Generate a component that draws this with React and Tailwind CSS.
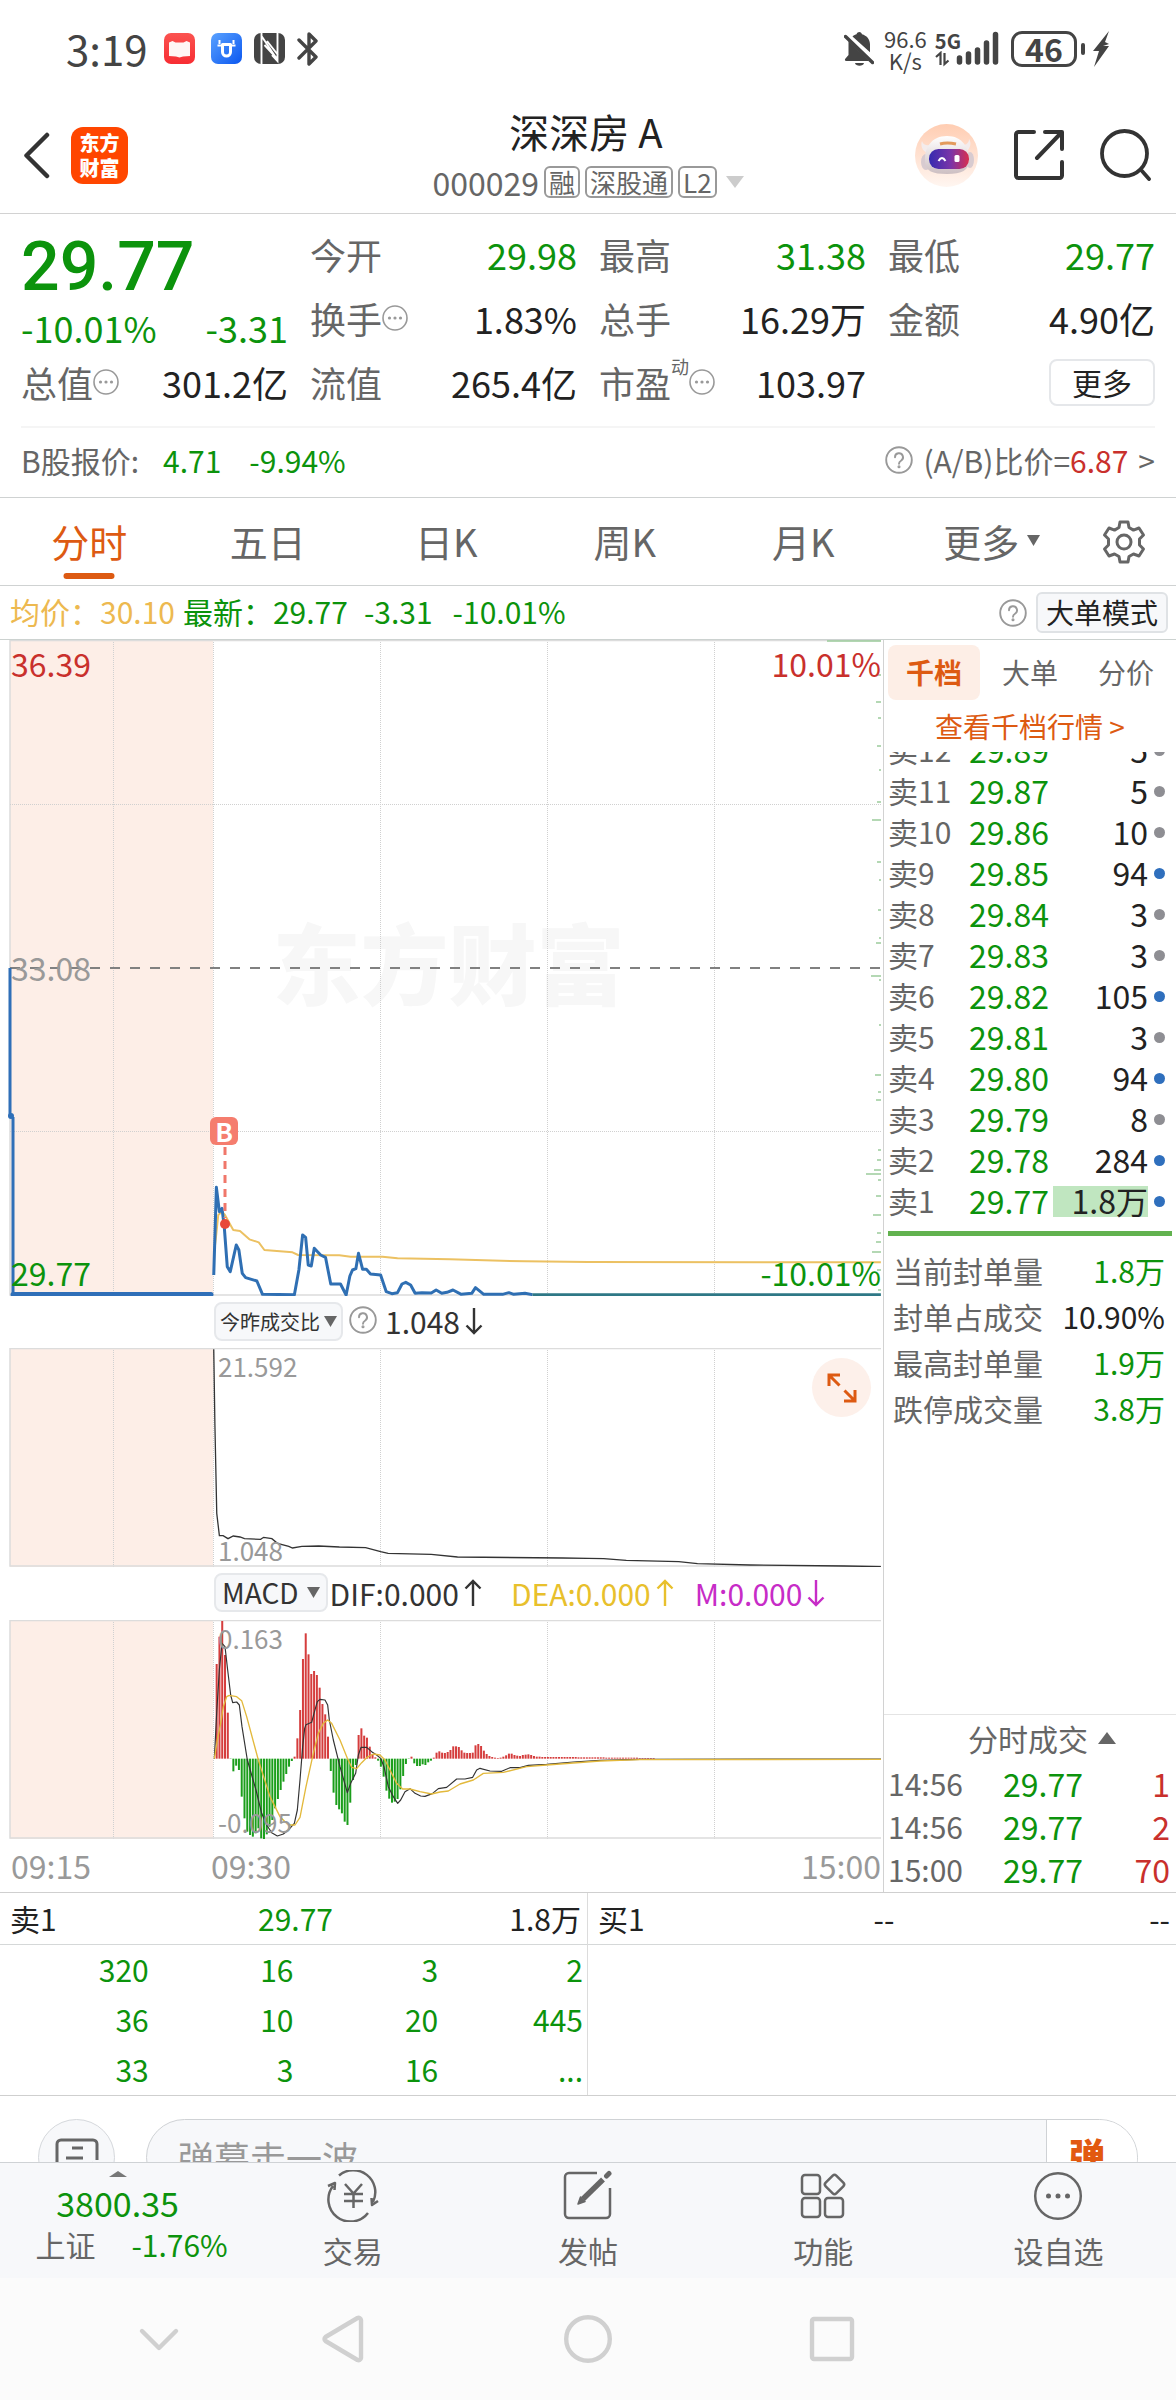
import React from "react";

const green = "text-[#0c930c]";
const SANS = 'font-["Noto_Sans_CJK_SC",sans-serif]';

function Dots() {
  return (
    <svg className="size-[26px] shrink-0" viewBox="0 0 26 26" fill="none" aria-hidden="true">
      <circle cx="13" cy="13" r="12" stroke="#999" strokeWidth="1.6" />
      <g fill="#999"><circle cx="7.5" cy="13" r="1.6" /><circle cx="13" cy="13" r="1.6" /><circle cx="18.5" cy="13" r="1.6" /></g>
    </svg>
  );
}

function Help() {
  return (
    <button type="button" aria-label="说明" className="shrink-0">
      <svg className="block size-7" viewBox="0 0 28 28" fill="none" stroke="#999" strokeWidth="1.9" strokeLinecap="round">
        <circle cx="14" cy="14" r="12.8" />
        <path d="M10 11.3a4 4 0 1 1 6 3.4c-1.5.9-2 1.5-2 3" />
        <circle cx="14" cy="20.7" r="0.6" fill="#999" />
      </svg>
    </button>
  );
}

function Arrow({ up }) {
  return (
    <svg className="h-7 w-5 shrink-0" viewBox="0 0 20 28" fill="none" stroke="currentColor" strokeWidth="2.4" aria-hidden="true">
      {up ? <path d="M10 27V2M2.500 9.500 10 2l7.500 7.500" /> : <path d="M10 1v25M2.500 18.500 10 26l7.500-7.500" />}
    </svg>
  );
}

function Down({ className }) {
  return <svg className={className} viewBox="0 0 18 12" preserveAspectRatio="none" aria-hidden="true"><path d="M0 0h18L9 12z" fill="currentColor" /></svg>;
}

function StatusBar() {
  return (
    <div className="flex h-[98px] items-center justify-between pr-[66px] pb-px pl-[66px] text-[#444]">
      <div className="flex items-center gap-3">
        <span className="mr-1 pb-0.5 text-[42px] leading-none">3:19</span>
        <svg className="size-[31px]" viewBox="0 0 31 31" aria-hidden="true">
          <defs><linearGradient id="rd" x1="0" y1="0" x2="0" y2="1"><stop stopColor="#fb5350" /><stop offset="1" stopColor="#f72d33" /></linearGradient></defs>
          <rect width="31" height="31" rx="7" fill="url(#rd)" />
          <path d="M5 9.500 8.500 8l3 1.500h8L22.500 8 26 9.500V23l-7 .5-3.500 1-3.500-1L5 23z" fill="#fff6f4" />
        </svg>
        <svg className="ml-1 size-[31px]" viewBox="0 0 31 31" aria-hidden="true">
          <defs><linearGradient id="bl" x1="0" y1="0" x2="1" y2="1"><stop stopColor="#5aa2ff" /><stop offset="1" stopColor="#0b57f0" /></linearGradient></defs>
          <rect width="31" height="31" rx="7" fill="url(#bl)" />
          <path d="M11.500 11.500h8V19a4 4 0 0 1-8 0z" fill="none" stroke="#fff" strokeWidth="3" strokeLinejoin="round" />
          <path d="M6.500 12.500h5M19.500 12.500h5M8.500 7v4M22.500 7v4" stroke="#fff" strokeWidth="2" />
        </svg>
        <svg className="size-[31px]" viewBox="0 0 31 31" aria-hidden="true">
          <rect width="31" height="31" rx="7" fill="#444" />
          <path d="M7.500 31V3L23.500 27M23.500 0V28L18 22M7.500 0v4M10.500 12l12 13M13 8l11 14" stroke="#fff" strokeWidth="1.900" fill="none" />
        </svg>
        <svg className="h-[34px] w-[22px]" viewBox="0 0 22 34" fill="none" stroke="#444" strokeWidth="3.400" strokeLinejoin="round" strokeLinecap="round" aria-hidden="true">
          <path d="m2 8 17 17-7 7V2l7 7L2 26" />
        </svg>
      </div>
      <div className="flex items-center">
        <svg className="h-[34px] w-[30px]" viewBox="0 0 30 34" fill="#444" aria-hidden="true">
          <path d="M8.500 4.500c1.500-1.500 3-2 4-2.300C13 .7 14.200 0 15.300 0s2.200.7 2.700 2.200c4.500 1.300 8 4.800 8 10v8L8.500 4.500z" />
          <path d="M4.500 9 25 29H2.500c-1.800 0-2-1.500-1-2.500L4.500 23z" />
          <path d="m1.500 4.500 27 26" stroke="#444" strokeWidth="3.500" strokeLinecap="round" />
          <path d="M11 31h9c-.5 3.500-8.500 3.500-9 0z" />
        </svg>
        <span className="ml-2.5 w-[43px] text-center text-[22px] leading-[22px]">96.6<br />K/s</span>
        <div className="ml-2 flex flex-col">
          <span className="text-xl leading-5 font-bold">5G</span>
          <svg className="h-4 w-6" viewBox="0 0 24 16" fill="none" stroke="#444" strokeWidth="2.200" aria-hidden="true">
            <path d="M1 6l4.500-4v12M9.500 2v11l4-3.500" />
          </svg>
        </div>
        <svg className="-ml-1.5 h-[36px] w-[44px]" viewBox="0 0 44 36" stroke="#444" strokeWidth="5.500" strokeLinecap="round" aria-hidden="true">
          <path d="M4.500 27v4M13.500 23v8M22.500 19v12M31.500 12v19M40.500 3.500V31" />
        </svg>
        <div className="ml-3 flex h-[36px] w-[66px] items-center justify-center rounded-[11px] border-3 border-[#444] pb-0.5 text-[32px] leading-none font-bold">46</div>
        <span className="ml-1 h-3 w-1 rounded-sm bg-[#444]" />
        <svg className="ml-2 h-9 w-[17px]" viewBox="0 0 17 36" fill="#444" aria-hidden="true"><path d="M16 0 0 20h6L1 36l15-21h-6l6-2-4-2z" /></svg>
      </div>
    </div>
  );
}

function Header() {
  return (
    <header className="grid grid-cols-[1fr_auto_1fr] items-center border-b border-[#d2d2d2] px-6 pt-2 pb-[9px]">
      <div className="flex items-center gap-[21px]">
        <button type="button" aria-label="返回">
          <svg className="h-[47px] w-[26px]" viewBox="0 0 26 47" fill="none" stroke="#333" strokeWidth="4.500" strokeLinecap="round" strokeLinejoin="round"><path d="M23 3 2.500 23.500 23 44" /></svg>
        </button>
        <a href="#home" className="flex size-[57px] flex-col items-center justify-center rounded-xl bg-[#ff4600] text-xl leading-[25px] font-black text-white">
          <span>东方</span><span>财富</span>
        </a>
      </div>
      <div className="flex flex-col items-center gap-1">
        <h1 className="pr-1 text-[40px] leading-[50px] text-[#222]">深深房 A</h1>
        <button type="button" className="flex items-center gap-[5px] text-[#666]">
          <span className="text-[32px] leading-[44px]">000029</span>
          {["融", "深股通", "L2"].map((t) => (
            <span key={t} className="rounded-md border-2 border-[#999] px-[3px] text-[26px] leading-[28px]">{t}</span>
          ))}
          <Down className="ml-1 h-3 w-[18px] text-[#ccc]" />
        </button>
      </div>
      <div className="flex items-center justify-end gap-9">
        <button type="button" aria-label="智能助手">
          <svg className="size-[63px]" viewBox="0 0 63 63">
            <defs>
              <linearGradient id="bg" x1="0" y1="0" x2="0" y2="1"><stop stopColor="#ffcdb2" /><stop offset="1" stopColor="#fff6f1" /></linearGradient>
              <linearGradient id="vs"><stop stopColor="#352bb0" /><stop offset=".55" stopColor="#7b35a8" /><stop offset="1" stopColor="#d8304f" /></linearGradient>
              <linearGradient id="hd" x1="0" y1="0" x2="0" y2="1"><stop stopColor="#fff" /><stop offset="1" stopColor="#cdbfc2" /></linearGradient>
            </defs>
            <circle cx="31.500" cy="31.500" r="31.500" fill="url(#bg)" />
            <path d="M7 17c1 4 5 5 8 4l-3 8c-4-2-7-7-5-12zM54 15c0 5-4 6-7 6l4 7c4-3 6-9 3-13z" fill="#f4ecec" />
            <ellipse cx="11" cy="38" rx="5" ry="8" fill="#d8cbd0" /><ellipse cx="55" cy="36" rx="4" ry="8" fill="#d8cbd0" />
            <path d="M10 38c-1-15 7-26 22-26s22 11 22 25c0 9-7 13-22 13S11 47 10 38z" fill="url(#hd)" />
            <rect x="14" y="25" width="40" height="20" rx="9.500" fill="url(#vs)" />
            <path d="M25 20q7-2 16 0" stroke="#e39a5c" strokeWidth="3" />
            <path d="M23.500 37q3.500-6 7 0" fill="none" stroke="#fff" strokeWidth="2" /><rect x="39.500" y="31" width="5" height="7" rx="1.500" fill="#fff" />
          </svg>
        </button>
        <button type="button" aria-label="分享">
          <svg className="size-[50px]" viewBox="0 0 50 50" fill="none" stroke="#333" strokeWidth="4" strokeLinecap="round" strokeLinejoin="round">
            <path d="M20 2H4.500A2.500 2.500 0 0 0 2 4.500v41A2.500 2.500 0 0 0 4.500 48h41a2.500 2.500 0 0 0 2.500-2.500V32M31 2h17v17M47 3 23 28" />
          </svg>
        </button>
        <button type="button" aria-label="搜索">
          <svg className="size-[52px]" viewBox="0 0 52 52" fill="none" stroke="#333" strokeWidth="3.800" strokeLinecap="round"><ellipse cx="24.500" cy="24.500" rx="22.500" ry="22.500" /><path d="m42 42 7 8" /></svg>
        </button>
      </div>
    </header>
  );
}

function Stat({ label, dots, sup, value, tone = "text-[#222]" }) {
  return (
    <div className="flex h-16 items-center justify-between text-[36px] leading-none">
      <dt className="flex items-center text-[#666]">
        {label}
        {sup && <sup className="top-[-16px] text-lg leading-none">{sup}</sup>}
        {dots && <Dots />}
      </dt>
      <dd className={tone}>{value}</dd>
    </div>
  );
}

function Quote() {
  return (
    <section className="px-[21px]">
      <dl className="grid grid-cols-4 gap-x-[22px] pt-2 pb-3">
        <div>
          <div className={'h-[86px] font-["Roboto"] text-[68px] leading-[90px] font-medium ' + green}>29.77</div>
          <div className={"flex h-[42px] items-center justify-between pb-1 text-[36px] leading-none " + green}><span>-10.01%</span><span>-3.31</span></div>
          <Stat label="总值" dots value="301.2亿" />
        </div>
        <div>
          <Stat label="今开" value="29.98" tone={green} />
          <Stat label="换手" dots value="1.83%" />
          <Stat label="流值" value="265.4亿" />
        </div>
        <div>
          <Stat label="最高" value="31.38" tone={green} />
          <Stat label="总手" value="16.29万" />
          <Stat label="市盈" sup="动" dots value="103.97" />
        </div>
        <div>
          <Stat label="最低" value="29.77" tone={green} />
          <Stat label="金额" value="4.90亿" />
          <div className="flex h-16 items-center justify-end">
            <button type="button" className="rounded-lg border-2 border-[#e5e7ea] px-[21px] text-[30px] leading-[43px] text-[#222]">更多</button>
          </div>
        </div>
      </dl>
      <div className="flex h-[71px] items-center justify-between border-t-2 border-[#f5f5f5] pb-1.5 text-[30px] leading-none text-[#666]">
        <div className={"flex items-center " + green}><span className="text-[#666]">B股报价:</span><span className="ml-6">4.71</span><span className="ml-7">-9.94%</span></div>
        <div className="flex items-center gap-2.5"><Help /><a href="#ab" className="flex">(A/B)比价=<span className="text-[#c9302c]">6.87</span><span className="ml-2.5">&gt;</span></a></div>
      </div>
    </section>
  );
}

function Tabs() {
  return (
    <nav className="grid h-[89px] grid-cols-[repeat(6,minmax(0,1fr))_105px] items-stretch border-y border-[#cfd2d2] text-[38px] leading-none text-[#666]">
      {["分时", "五日", "日K", "周K", "月K"].map((t, i) => (
        <button key={t} type="button" className={i === 0 ? "relative pb-0.5 text-[#dd5a12]" : "pb-0.5"}>
          {t}
          {i === 0 && <span className="absolute bottom-1.5 left-1/2 h-1.5 w-[51px] -translate-x-1/2 rounded-full bg-[#dd5a12]" />}
        </button>
      ))}
      <button type="button" className="flex items-center justify-center gap-2 pb-0.5 pl-5">更多<Down className="h-[11px] w-[13px]" /></button>
      <button type="button" aria-label="设置" className="flex items-center justify-center">
        <svg className="size-11" viewBox="0 0 44 44" fill="none" stroke="#666" strokeWidth="3" strokeLinejoin="round">
          <path d="M18 2h8l1 5.500 4.500 2.600L37 8l4.500 7-4 4v6l4 4-4.500 7-5.500-2-4.500 2.500L26 42h-8l-1-5.500-4.500-2.500L7 36l-4.500-7 4-4v-6l-4-4L7 8l5.500 2.100L17 7.500z" />
          <circle cx="22" cy="22" r="7" />
        </svg>
      </button>
    </nav>
  );
}

function Legend() {
  return (
    <div className={"flex h-[54px] items-center justify-between border-b border-[#ccd2d0] pr-2 pl-2.5 text-[30px] leading-none " + green}>
      <div className="flex items-center pb-[3px]"><span className="text-[#edb950]">均价：30.10</span><span className="ml-2">最新：29.77</span><span className="ml-4">-3.31</span><span className="ml-5">-10.01%</span></div>
      <div className="flex items-center gap-[9px]">
        <Help />
        <button type="button" className="rounded-md border-2 border-[#dfe2e5] bg-[#f7f8fa] px-2 text-[28px] leading-[37px] text-[#222]">大单模式</button>
      </div>
    </div>
  );
}

const GRID_X = [113, 213, 380, 547, 714];

const PRICE = "570,1125 577,862 585,935 592,925 598,980 606,1100 614,1115 630,1035 637,1050 646,1120 655,1133 685,1143 700,1183 785,1184 797,1110 807,1005 815,1012 822,1095 830,1098 838,1045 855,1065 868,1072 882,1152 908,1152 923,1185 933,1128 940,1110 949,1106 956,1060 967,1108 977,1108 988,1122 1015,1125 1030,1175 1045,1181 1060,1178 1072,1152 1082,1147 1095,1155 1107,1180 1125,1178 1150,1179 1163,1170 1178,1180 1192,1177 1208,1170 1230,1183 1258,1180 1268,1163 1290,1183 1340,1183 1357,1178 1370,1183 1400,1180 1420,1184";
const AVERAGE = "572,1050 577,1000 582,945 592,935 600,945 612,970 622,990 640,993 665,1018 690,1027 705,1050 780,1057 795,1065 905,1066 935,1070 1020,1070 1060,1075 1200,1078 1400,1084 1568,1086 2349,1087";
const RATIO = "570,178 573,400 578,670 585,737 595,737 608,746 622,738 640,741 652,746 695,748 703,742 725,746 740,760 770,769 780,774 805,769 850,768 905,771 975,773 1015,785 1035,790 1150,793 1220,801 1500,804 1568,805 1610,806 1670,811 1810,815 1860,821 2000,825 2250,828 2349,830";
const DIF = "103,536 110,400 118,270 126,190 135,200 143,270 152,345 158,368 170,366 178,375 186,440 202,540 228,630 245,700 260,735 275,758 292,768 310,762 325,750 343,730 352,690 360,600 368,500 374,445 378,434 395,427 402,400 412,365 420,358 435,360 443,375 448,420 460,480 480,560 502,638 512,610 527,580 535,525 543,502 560,502 575,515 590,525 602,535 612,560 625,620 640,650 653,670 662,660 675,635 690,626 705,640 722,648 735,649 757,641 775,626 800,622 830,597 855,597 878,592 890,570 900,565 930,573 965,574 990,563 1020,563 1045,556 1100,553 1180,546 1260,541 1380,538 2103,537";
const DEA = "103,536 112,480 122,430 130,380 140,350 148,346 170,350 185,362 200,410 235,540 270,650 300,710 325,735 345,735 360,712 378,620 400,520 415,460 430,430 443,420 455,430 480,480 502,535 515,562 530,566 545,548 560,533 580,522 600,525 615,540 635,580 650,610 668,627 690,627 720,635 755,642 780,636 805,633 840,612 880,600 910,580 970,577 1040,560 1100,555 1260,543 1380,539 2103,538";
const MACD = [284, 366, 413, 311, 138, -1, -38, -21, -34, -114, -179, -219, -229, -234, -224, -209, -239, -241, -227, -204, -184, -149, -121, -94, -69, -46, -24, -7, 6, 61, 146, 299, 376, 313, 254, 263, 251, 213, 164, 133, 66, -37, -102, -139, -152, -164, -189, -199, -132, -64, -19, 71, 91, 69, 63, 36, 14, 4, -6, -24, -54, -96, -120, -132, -129, -121, -92, -52, -16, -1, 6, -14, -22, -22, -17, -19, -11, -6, 3, 18, 22, 18, 17, 20, 26, 37, 37, 35, 25, 18, 17, 17, 18, 40, 44, 38, 24, 14, 8, 5, 3, 2, 3, 6, 10, 15, 15, 11, 9, 8, 11, 12, 13, 11, 8, 6, 6, 5, 5, 5, 5, 5, 5, 5, 5, 5, 5, 5, 5, 5, 4, 4, 4, 4, 4, 4, 4, 4, 4, 4, 3, 3, 3, 3, 3, 3, 3, 3, 3, 3, 3, 3, 2, 2, 2, 2, 2, 2];
const TICKS = [[641, 54], [675, 3], [702, 5], [718, 3], [746, 4], [770, 2], [802, 4], [820, 9], [862, 4], [880, 2], [910, 3], [938, 2], [943, 5], [976, 10], [980, 2], [1025, 2], [1075, 6], [1092, 3], [1100, 5], [1150, 3], [1160, 4], [1170, 7], [1174, 15], [1180, 3], [1196, 5], [1215, 8], [1233, 4], [1242, 5], [1252, 9], [1270, 4], [1290, 3]];

function Frame({ top, height, label, children }) {
  return (
    <svg className="block h-full w-full" viewBox={`8 ${top} 873 ${height}`} preserveAspectRatio="none" role="img" aria-label={label}>
      <rect x="10" y={top} width="203" height={height} fill="#fdeee7" />
      <g stroke="#d0d0d0" strokeDasharray="1 1">
        {GRID_X.map((x) => <path key={x} d={`M${x}.5 ${top}v${height}`} />)}
      </g>
      <path d={`M881 ${top + 0.5}H10V${top + height - 1}H881`} fill="none" stroke="#dcdcdc" strokeWidth="1.500" />
      {children}
    </svg>
  );
}

function PriceChart() {
  return (
    <div className="relative h-[656px] text-[32px] leading-none">
      <div className="absolute inset-0 flex items-center justify-center pb-4 pl-2 text-[88px] font-black text-[#f7f7f7]" aria-hidden="true">东方财富</div>
      <div className="relative h-full">
        <Frame top={640} height={656} label="分时走势">
          <path d="M10 804.500H881M10 1131.500H881" stroke="#d0d0d0" strokeDasharray="1 1" />
          <path d="M10 968H881" stroke="#808080" strokeWidth="2" strokeDasharray="10 10" />
          <g stroke="#9bcb9b" strokeWidth="1.500">{TICKS.map(([y, w]) => <path key={y} d={`M${881 - w} ${y}H881`} />)}</g>
          <g transform="translate(0 900) scale(0.375 0.33333)" fill="none" strokeLinejoin="round">
            <polyline points={AVERAGE} stroke="#ecc162" strokeWidth="2" vectorEffect="non-scaling-stroke" />
            <polyline points={PRICE} stroke="#2f6fb3" strokeWidth="3" vectorEffect="non-scaling-stroke" />
            <path d="M1420 1184H2349" stroke="#2e7886" strokeWidth="3" vectorEffect="non-scaling-stroke" />
          </g>
          <path d="M10 968V1116M13 1117V1294" stroke="#2f6fb8" strokeWidth="3" />
          <path d="M13 1294.500H211" stroke="#2f6fb8" strokeWidth="5" strokeLinecap="round" />
          <circle cx="11" cy="1116" r="3" fill="#2f6fb8" />
          <path d="M225 1147V1218" stroke="#f0776a" strokeWidth="3" strokeDasharray="8 6" />
          <circle cx="225" cy="1224" r="5" fill="#e8483a" />
        </Frame>
      </div>
      <span className="absolute top-[7px] left-[3px] text-[#c9302c]">36.39</span>
      <span className="absolute top-[7px] right-0 text-[#c9302c]">10.01%</span>
      <span className="absolute top-[311px] left-[3px] text-[#999]">33.08</span>
      <span className={"absolute bottom-[8px] left-[3px] " + green}>29.77</span>
      <span className={"absolute right-0 bottom-[8px] " + green}>-10.01%</span>
      <span className="absolute top-[477px] left-[202px] flex h-7 w-7 items-center justify-center rounded-md bg-[#f57d6e] text-[26px] leading-none font-bold text-white">B</span>
    </div>
  );
}

function IndicatorCharts() {
  return (
    <>
      <div className="flex h-[52px] items-center pb-0.5 pl-[206px] text-[30px] leading-none text-[#333]">
        <button type="button" className="flex items-center gap-1 rounded-lg border-2 border-[#e6e8eb] bg-[#f7f8fa] px-1 text-xl leading-[35px]">今昨成交比<Down className="h-[11px] w-[13px] text-[#666]" /></button>
        <span className="ml-1.5"><Help /></span>
        <span className="ml-2">1.048</span><span className="ml-1"><Arrow /></span>
      </div>
      <div className="relative h-[219px] text-[26px] leading-none text-[#999]">
        <Frame top={1348} height={219} label="今昨成交比">
          <polyline points={RATIO} transform="translate(0 1290) scale(0.375 0.33333)" fill="none" stroke="#333" strokeWidth="1.300" vectorEffect="non-scaling-stroke" />
        </Frame>
        <span className="absolute top-[5px] left-[210px]">21.592</span>
        <span className="absolute bottom-1 left-[210px]">1.048</span>
        <button type="button" aria-label="全屏" className="absolute top-[10px] right-[10px] flex size-[59px] items-center justify-center rounded-full bg-[#fdf0ea]">
          <svg className="size-[30px]" viewBox="0 0 30 30" fill="none" stroke="#dd5a12" strokeWidth="3"><path d="M13 2H2v11M2.500 2.500 12.500 12.500M17 28h11V17M27.500 27.500 17.500 17.500" /></svg>
        </button>
      </div>
      <div className="flex h-[53px] items-center pb-0.5 pl-[206px] text-[30px] leading-none text-[#333]">
        <button type="button" className="flex items-center gap-2 rounded-lg border-2 border-[#e6e8eb] bg-[#f7f8fa] px-1.5 text-[28px] leading-[35px]">MACD<Down className="h-[11px] w-[13px] text-[#666]" /></button>
        <span className="ml-0.5 flex items-center gap-1">DIF:0.000<Arrow up /></span>
        <span className="ml-7 flex items-center gap-1 text-[#e8c02c]">DEA:0.000<Arrow up /></span>
        <span className="ml-5 flex items-center gap-1 text-[#c72cc7]">M:0.000<Arrow /></span>
      </div>
      <div className="relative h-[219px] text-[26px] leading-none text-[#999]">
        <Frame top={1620} height={219} label="MACD">
          <g transform="translate(180 1580) scale(0.33333)" fill="none" strokeLinejoin="round">
            {MACD.map((v, i) => (
              <rect key={i} x={107 + i * 8.35} y={v > 0 ? 536 - v : 536} width="6" height={Math.abs(v)} fill={v > 0 ? "#d53d3d" : "#1b9e1b"} />
            ))}
            <polyline points={DIF} stroke="#333" strokeWidth="3.500" />
            <polyline points={DEA} stroke="#e3b93c" strokeWidth="4" />
          </g>
        </Frame>
        <span className="absolute top-[5px] left-[210px]">0.163</span>
        <span className="absolute bottom-1 left-[210px]">-0.095</span>
      </div>
      <div className="flex h-[53px] items-center pb-0.5 pl-[3px] text-[32px] leading-none text-[#999]">
        <span className="w-[200px]">09:15</span><span className="flex-1">09:30</span><span>15:00</span>
      </div>
    </>
  );
}

const ASKS = [
  [12, "29.89", "5"], [11, "29.87", "5"], [10, "29.86", "10"], [9, "29.85", "94", 1], [8, "29.84", "3"], [7, "29.83", "3"],
  [6, "29.82", "105", 1], [5, "29.81", "3"], [4, "29.80", "94", 1], [3, "29.79", "8"], [2, "29.78", "284", 1], [1, "29.77", "1.8万", 1],
];

const SEAL = [["当前封单量", "1.8万", true], ["封单占成交", "10.90%", false], ["最高封单量", "1.9万", true], ["跌停成交量", "3.8万", true]];

function DepthPanel() {
  return (
    <aside className="flex flex-col">
      <div className="flex items-center gap-1 pt-[5px] pr-1 pl-1 text-[28px] leading-[55px] text-[#666]">
        <button type="button" className="flex-1 rounded-lg bg-[#fdeee6] font-bold text-[#dd5a12]">千档</button>
        <button type="button" className="flex-1">大单</button>
        <button type="button" className="flex-1">分价</button>
      </div>
      <a href="#depth" className="block text-center text-[28px] leading-[52px] text-[#dd5a12]">查看千档行情 &gt;</a>
      <div className="flex h-[470px] items-end overflow-hidden pr-[11px] pl-1">
        <table className="w-full table-fixed text-[32px] leading-none">
          <tbody>
            {ASKS.map(([n, p, q, big]) => (
              <tr key={n} className="h-[41px]">
                <td className="w-[81px] pb-[3px] text-[30px] text-[#666]">卖{n}</td>
                <td className={"w-[84px] pb-[3px] " + green}>{p}</td>
                <td className={n === 1 ? "text-right text-[#222]" : "pb-[3px] text-right text-[#222]"}><span className={n === 1 ? "block h-[31px] bg-[#c0e6c0] leading-[28px]" : "block"}>{q}</span></td>
                <td className="w-[17px]"><span className={big ? "ml-auto block size-[11px] rounded-full bg-[#2f6fbd]" : "ml-auto block size-[11px] rounded-full bg-[#8e8e93]"} /></td>
              </tr>
            ))}
          </tbody>
        </table>
      </div>
      <div className="mx-1 mt-[9px] h-[5px] bg-[#62b24f]" />
      <dl className="mt-[11px] pr-[11px] pl-[9px] text-[30px] leading-[46px]">
        {SEAL.map(([k, v, g]) => (
          <div key={k} className="flex justify-between"><dt className="text-[#666]">{k}</dt><dd className={g ? green : "text-[#222]"}>{v}</dd></div>
        ))}
      </dl>
      <div className="mt-auto border-t border-[#e4e4e4]">
        <button type="button" className="flex w-full items-center justify-center gap-2.5 pb-0.5 pl-6 text-[30px] leading-[46px] text-[#666]">分时成交<Down className="h-3 w-[18px] rotate-180" /></button>
        <table className="w-full table-fixed text-[32px] leading-none">
          <tbody>
            {[["14:56", "1"], ["14:56", "2"], ["15:00", "70"]].map(([t, q], i) => (
              <tr key={i} className="h-[43px]">
                <td className="w-[119px] pb-[3px] pl-1 text-[30px] text-[#666]">{t}</td>
                <td className={"w-[84px] pb-[3px] " + green}>29.77</td>
                <td className="pr-[6px] pb-[3px] text-right text-[#c9302c]">{q}</td>
              </tr>
            ))}
          </tbody>
        </table>
      </div>
    </aside>
  );
}

function Queue() {
  const rows = [["320", "16", "3", "2"], ["36", "10", "20", "445"], ["33", "3", "16", "..."]];
  return (
    <section className="grid grid-cols-2 border-y border-[#cfcfcf] text-[30px] leading-none text-[#222]">
      <div className="border-r border-[#dcdcdc]">
        <div className="grid h-[52px] grid-cols-3 items-center border-b border-[#d5d8d8] pr-1.5 pb-0.5 pl-2.5">
          <span>卖1</span><span className={"text-center " + green}>29.77</span><span className="text-right">1.8万</span>
        </div>
        <div className="pr-1 pl-1">
          <table className={"w-full table-fixed text-right " + green}>
            <tbody>
              {rows.map((r, i) => <tr key={i} className="h-[50px]">{r.map((c, j) => <td key={j} className="pb-0.5">{c}</td>)}</tr>)}
            </tbody>
          </table>
        </div>
      </div>
      <div>
        <div className="grid h-[52px] grid-cols-3 items-center border-b border-[#d5d8d8] pr-1.5 pb-0.5 pl-2.5">
          <span>买1</span><span className="text-center">--</span><span className="text-right">--</span>
        </div>
      </div>
    </section>
  );
}

function Barrage() {
  return (
    <div className="flex h-[66px] items-start overflow-hidden px-[38px] pt-[23px]">
      <button type="button" aria-label="评论" className="flex size-[77px] shrink-0 items-start justify-center rounded-full border border-[#d5d8dc] bg-[#f7f8fa] pt-[18px]">
        <svg className="size-[44px]" viewBox="0 0 44 44" fill="none" stroke="#666" strokeWidth="3"><path d="M42 22V6a4 4 0 0 0-4-4H6a4 4 0 0 0-4 4v32h20M17 10h11M11 20h17M31 34l7-8 5 5" /></svg>
      </button>
      <label className="ml-[31px] flex h-[77px] flex-1 overflow-hidden rounded-full border border-[#cfd2d5] bg-[#f7f8fa]">
        <span className="sr-only">弹幕</span>
        <input type="text" placeholder="弹幕走一波" className="h-full flex-1 bg-transparent pb-0.5 pl-[31px] text-[36px] leading-none outline-none placeholder:text-[#999]" />
        <span className="h-full w-[91px] border-l border-[#cfd2d5] bg-white pt-4 pl-[22px] text-[36px] leading-none font-black text-[#e2590f]">弹</span>
      </label>
    </div>
  );
}

const ACTIONS = [
  ["交易", <path key="a" d="M12 5.500A22 22 0 0 1 46 32M41 43A22 22 0 0 1 6 16M1 16l7-3-.5 7M51 31l-6 4-.5-7M18 14l8.500 9.500L35 14M26.500 23.500V38M17 24h19M17 31h19" />],
  ["发帖", <g key="b"><path d="M35 3H7a4 4 0 0 0-4 4v37a4 4 0 0 0 4 4h37a4 4 0 0 0 4-4V18" /><path d="M21 29 41 9.500" strokeWidth="5.500" /><path d="m16 34 2.500-7 4.500 4.500z" strokeWidth="1.500" fill="#666" /><path d="m44.500 6 2.500-2.500" strokeWidth="5" strokeLinecap="round" /></g>],
  ["功能", <g key="c"><rect x="5" y="5" width="18" height="19" rx="3" /><rect x="5" y="28" width="18" height="19" rx="3" /><rect x="28" y="28" width="18" height="19" rx="3" /><rect x="30" y="7" width="15" height="15" rx="2.500" transform="rotate(45 37.500 14.500)" /></g>],
  ["设自选", <g key="d"><circle cx="26" cy="26" r="22.800" /><g fill="#666" stroke="none"><circle cx="16.500" cy="26" r="2.500" /><circle cx="26" cy="26" r="2.500" /><circle cx="35.500" cy="26" r="2.500" /></g></g>],
];

function ActionBar() {
  return (
    <nav className="grid h-[116px] grid-cols-5 border-t border-[#cfd2d5] bg-[#f7f8fa] leading-none text-[#666]">
      <button type="button" className="flex flex-col items-center pt-2">
        <Down className="h-1.5 w-[18px] rotate-180 text-[#777]" />
        <span className={"mt-1 text-[34px] leading-[44px] " + green}>3800.35</span>
        <span className={"flex gap-9 pl-7 text-[30px] leading-[38px] " + green}><span className="text-[#666]">上证</span><span>-1.76%</span></span>
      </button>
      {ACTIONS.map(([t, icon]) => (
        <button key={t} type="button" className="flex flex-col items-center pt-[7px]">
          <svg className="size-[52px]" viewBox="0 0 52 52" fill="none" stroke="#666" strokeWidth="2.500" strokeLinejoin="round" aria-hidden="true">{icon}</svg>
          <span className="mt-1.5 text-[30px] leading-[44px]">{t}</span>
        </button>
      ))}
    </nav>
  );
}

const KEYS = [
  ["收起", <path key="1" d="m7 16 17 17 17-17" />],
  ["后退", <path key="2" d="M40 5v38a2.500 2.500 0 0 1-3.500 2L4.500 26a2.500 2.500 0 0 1 0-4L36.500 3A2.500 2.500 0 0 1 40 5z" />],
  ["主屏", <circle key="3" cx="24" cy="24" r="21.800" />],
  ["最近任务", <rect key="4" x="4" y="4" width="40" height="40" rx="2" />],
];

function SystemKeys() {
  return (
    <div className="grid h-[122px] grid-cols-[94fr_130fr_242fr_243fr_246fr_221fr] items-center bg-[#fbfbfb]">
      <span />
      {KEYS.map(([t, icon]) => (
        <button key={t} type="button" aria-label={t} className="flex justify-center">
          <svg className="size-12" viewBox="0 0 48 48" fill="none" stroke="#d0d0d0" strokeWidth="4.400" strokeLinecap="round" strokeLinejoin="round">{icon}</svg>
        </button>
      ))}
    </div>
  );
}

export default function App() {
  return (
    <div className={"w-full bg-white " + SANS}>
      <StatusBar />
      <Header />
      <Quote />
      <Tabs />
      <Legend />
      <main className="grid grid-cols-[minmax(0,1fr)_292px]">
        <div className="border-r border-[#d2d2d2] pr-0.5 pl-2">
          <PriceChart />
          <IndicatorCharts />
        </div>
        <DepthPanel />
      </main>
      <Queue />
      <Barrage />
      <ActionBar />
      <SystemKeys />
    </div>
  );
}
